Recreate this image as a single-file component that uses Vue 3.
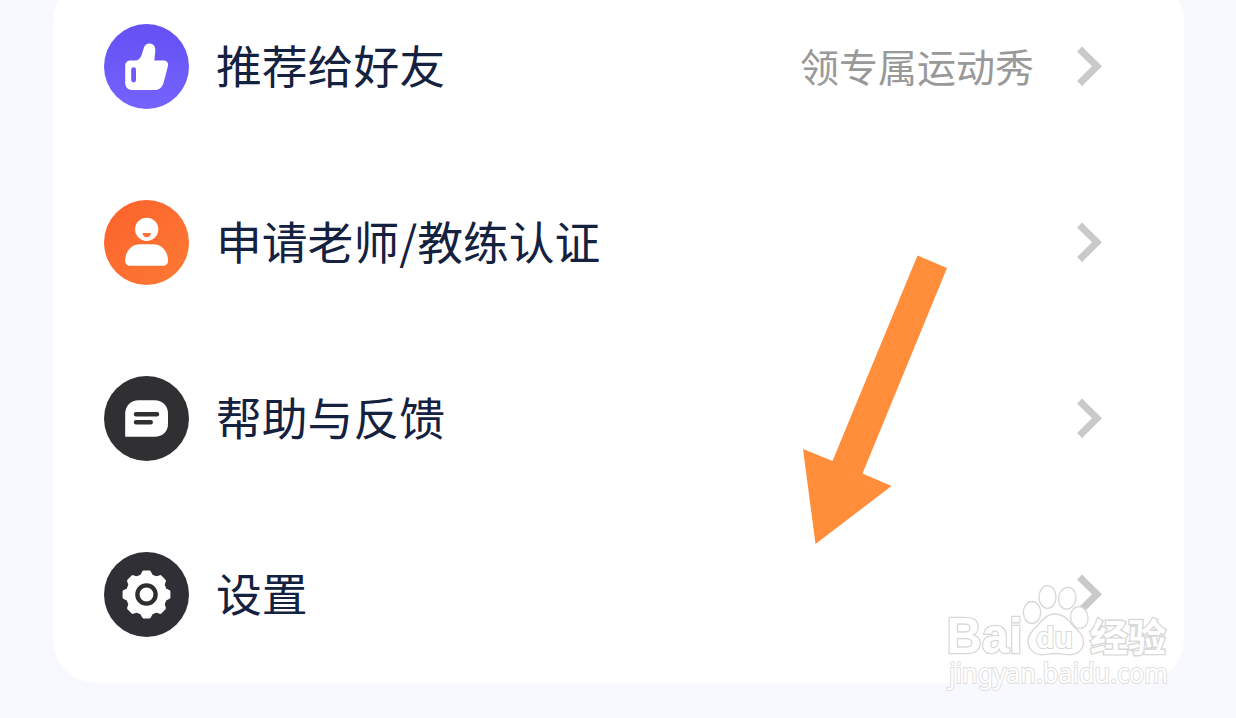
<script setup>
const rows = [
  { icon: 'like', label: '推荐给好友', note: '领专属运动秀' },
  { icon: 'coach', label: '申请老师/教练认证' },
  { icon: 'chat', label: '帮助与反馈' },
  { icon: 'gear', label: '设置' },
]

const gearPoints = Array.from({ length: 8 }, (_, i) =>
  [[-15, 19.2], [-7.5, 22.6], [7.5, 22.6], [15, 19.2]].map(([deg, r]) => {
    const a = ((i * 45 + deg) * Math.PI) / 180
    return `${(42.5 + r * Math.sin(a)).toFixed(2)},${(42.5 - r * Math.cos(a)).toFixed(2)}`
  }).join(' ')
).join(' ')
</script>

<template>
  <main class="screen">
    <section class="card">
      <div v-for="row in rows" :key="row.icon" class="row">
        <svg class="icon" viewBox="0 0 85 85">
          <defs>
            <linearGradient id="violet" x1="0" y1="0" x2="0" y2="1">
              <stop offset="0" stop-color="#6450f4" />
              <stop offset="1" stop-color="#7563fd" />
            </linearGradient>
            <linearGradient id="orange" x1="0" y1="0" x2="1" y2="1">
              <stop offset="0" stop-color="#fc622c" />
              <stop offset="1" stop-color="#fd7a34" />
            </linearGradient>
          </defs>
          <template v-if="row.icon === 'like'">
            <circle cx="42.5" cy="42.5" r="42.5" fill="url(#violet)" />
            <path fill="#fff" d="M27 36.6H31C35 36.6 37.3 33 38.6 28L39.6 24.5C40.6 21 43 19.3 46 19.6C49.8 20 51.7 23 51.3 27L50.3 36.6H59.5C63 36.6 64.6 39 63.9 42.2L59.8 58C58.3 63.5 55.5 66 50.5 66H28.5C24 66 21.2 63.2 21.2 59V42C21.2 38.6 23.4 36.6 27 36.6Z" />
            <rect x="27.2" y="43.2" width="4.8" height="15.2" rx="2.4" fill="#6d5bf8" />
          </template>
          <template v-else-if="row.icon === 'coach'">
            <circle cx="42.5" cy="42.5" r="42.5" fill="url(#orange)" />
            <circle cx="42.7" cy="29.3" r="11.6" fill="#fff" />
            <path fill="#fd7039" d="M38.5 33H47Q46.5 37.2 42.7 37.2T38.5 33Z" />
            <path fill="#fff" d="M36 44.3H49C57.5 44.3 64 51 64 60.5C64 64.2 62 65.8 58.5 65.8H26.5C23 65.8 21.2 64.2 21.2 60.5C21.2 51 27.5 44.3 36 44.3Z" />
          </template>
          <template v-else-if="row.icon === 'chat'">
            <circle cx="42.5" cy="42.5" r="42.5" fill="#303033" />
            <path fill="#fff" d="M34.5 24.3H50.5C58.5 24.3 64 30 64 37.5V48C64 55.5 58.5 60.7 50.5 60.7H21.2V37.5C21.2 30 26.8 24.3 34.5 24.3Z" />
            <path stroke="#303033" stroke-width="4.5" stroke-linecap="round" d="M32 38.2H53M32 46.2H46.7" />
          </template>
          <template v-else>
            <circle cx="42.5" cy="42.5" r="42.5" fill="#302f35" />
            <polygon :points="gearPoints" fill="#fff" stroke="#fff" stroke-width="3" stroke-linejoin="round" />
            <circle cx="42.5" cy="42.5" r="9.1" fill="#fff" stroke="#302f30" stroke-width="4.4" />
          </template>
        </svg>
        <span class="label">{{ row.label }}</span>
        <span v-if="row.note" class="note">{{ row.note }}</span>
        <svg class="chevron" viewBox="0 0 26 40">
          <path d="M3.5 3L21 20.3L3.5 37.6" fill="none" stroke="#c9c9c9" stroke-width="7" />
        </svg>
      </div>
    </section>

    <svg class="arrow" viewBox="0 0 146 290">
      <path fill="#ff8d3a" d="M115.5 0.5L145 13L60.5 218.5L89.5 231L13.5 289L1 194L30.5 206Z" />
    </svg>

    <svg class="watermark" viewBox="0 0 240 120">
      <g class="outline">
        <text class="brand" x="6.5" y="88" textLength="76" lengthAdjust="spacingAndGlyphs">Bai</text>
        <ellipse cx="92" cy="47.5" rx="8.7" ry="11" />
        <ellipse cx="107.5" cy="32" rx="8.5" ry="11.3" />
        <ellipse cx="127.3" cy="33.3" rx="8.7" ry="11" transform="rotate(10 127.3 33.3)" />
        <ellipse cx="139.3" cy="52.5" rx="8.7" ry="11" transform="rotate(-8 139.3 52.5)" />
        <path d="M115.5 49C123 49 128 54 132 59.5C137 65.5 143.5 68.5 143.5 77C143.5 85 137 90 129 89.7C124 89.5 121 88.5 115.5 88.5S107 89.8 102 89.8C94 89.8 88 84 88 76C88 68 94.5 64.5 98.5 59.5C102.5 54.5 107 49 115.5 49Z" />
        <text class="du" x="96" y="82.5" textLength="37" lengthAdjust="spacingAndGlyphs">du</text>
        <text class="cn" x="150" y="86" textLength="76" lengthAdjust="spacingAndGlyphs">经验</text>
        <text class="site" x="9" y="118" textLength="219" lengthAdjust="spacingAndGlyphs">jingyan.baidu.com</text>
      </g>
    </svg>
  </main>
</template>

<style>
body {
  margin: 0;
  background: #f8f9fe;
}
</style>

<style scoped>
.screen {
  position: relative;
  width: 1236px;
  height: 718px;
  overflow: hidden;
  background: #f8f9fe;
  font-family: "Noto Sans CJK SC", sans-serif;
}
.card {
  width: 1131px;
  height: 705px;
  margin: -22px 0 0 53px;
  border-radius: 44px;
  background: #fff;
}
.row {
  display: flex;
  align-items: center;
  height: 176px;
  padding: 0 82px 0 51px;
}
.icon {
  flex: none;
  width: 85px;
  height: 85px;
}
.label {
  flex: 1;
  margin-left: 27px;
  padding-bottom: 4px;
  font-size: 45.8px;
  line-height: 60px;
  color: #14213f;
  white-space: nowrap;
}
.note {
  margin-right: 42px;
  padding-bottom: 2px;
  font-size: 39px;
  line-height: 50px;
  color: #999;
  white-space: nowrap;
}
.chevron {
  flex: none;
  width: 26px;
  height: 40px;
}
.arrow {
  position: absolute;
  left: 802px;
  top: 255px;
  width: 146px;
  height: 290px;
}
.watermark {
  position: absolute;
  left: 940px;
  top: 565px;
  width: 240px;
  height: 120px;
  overflow: visible;
}
.outline {
  fill: #fff;
  stroke: #d8d8d8;
  stroke-width: 1.3;
}
.brand,
.du {
  font-family: "Liberation Sans", Arial, sans-serif;
  font-weight: 700;
  paint-order: stroke;
}
.brand {
  font-size: 50px;
  stroke-width: 2.6;
}
.du {
  font-size: 30px;
  stroke-width: 2;
}
.cn {
  font-size: 38px;
  font-weight: 700;
  stroke-width: 2.8;
  paint-order: stroke;
}
.site {
  font-family: "Noto Sans", sans-serif;
  font-size: 27px;
  font-weight: 400;
  stroke: #dedede;
  stroke-width: 2;
  paint-order: stroke;
}
</style>
